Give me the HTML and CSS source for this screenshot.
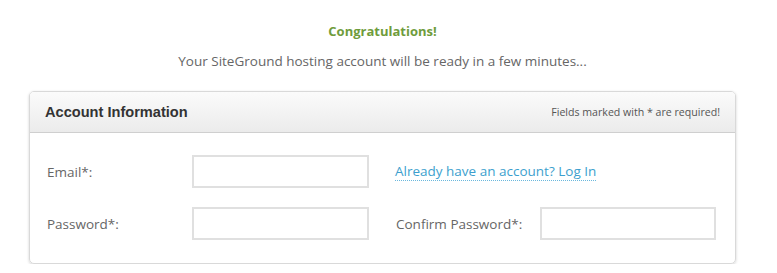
FILE: index.html
```html
<!DOCTYPE html>
<html>
<head>
<meta charset="utf-8">
<link rel="stylesheet" href="styles.css">
</head>
<body>
<div class="page">
  <div class="congrats">Congratulations!</div>
  <div class="sub">Your SiteGround hosting account will be ready in a few minutes...</div>
  <div class="panel">
    <div class="panel-head">
      <h2 class="panel-title">Account Information</h2>
      <span class="req">Fields marked with * are required!</span>
    </div>
    <div class="panel-body">
      <label class="lbl">Email*:</label>
      <input class="field" type="text">
      <a class="login" href="#">Already have an account? Log In</a>
      <label class="lbl">Password*:</label>
      <input class="field" type="password">
      <label class="lbl lbl-confirm">Confirm Password*:</label>
      <input class="field field-confirm" type="password">
    </div>
  </div>
</div>
</body>
</html>
```
FILE: styles.css
```css
html, body { margin: 0; padding: 0; background: #fff; }
body { font-family: "Open Sans", "DejaVu Sans", sans-serif; color: #666; }
.page { width: 707px; margin-left: 29px; }
.congrats {
  margin-top: 22px; line-height: 18px; text-align: center;
  font-size: 13px; font-weight: 700; color: #6f9c3c;
}
.sub {
  margin-top: 11px; line-height: 20px; text-align: center;
  font-size: 13.5px; color: #666;
}
.panel {
  margin-top: 20px;
  border: 1px solid #d9d9d9; border-radius: 5px;
  box-shadow: 0 1px 3px rgba(0,0,0,0.18);
  overflow: hidden;
}
.panel-head {
  height: 40px; display: flex; align-items: center; justify-content: space-between;
  padding: 0 15px 0 15px;
  background: linear-gradient(#fbfbfb, #ebebeb);
  border-bottom: 1px solid #cfcfcf;
}
.panel-title {
  margin: 0; font-family: "Liberation Sans", Arial, sans-serif;
  font-size: 14.6px; font-weight: 700; color: #333;
}
.req { font-size: 10.6px; color: #555; }
.panel-body {
  display: grid;
  grid-template-columns: 145px 177px 171px 176px;
  grid-auto-rows: 33px;
  row-gap: 19px;
  align-items: center;
  padding: 22px 19px 23px 17px;
}
.lbl { font-size: 13.5px; color: #666; }
.field {
  box-sizing: border-box; width: 100%; height: 33px; margin: 0;
  border: 2px solid #e0e0e0; background: #fff; outline: none;
}
.login {
  grid-column: 3 / 5; justify-self: start; margin-left: 26px;
  font-size: 13.5px; color: #3d9fce; text-decoration: none;
  border-bottom: 1px dotted #6bb8dd; line-height: 17px;
}
.lbl-confirm { padding-left: 27px; }
```
